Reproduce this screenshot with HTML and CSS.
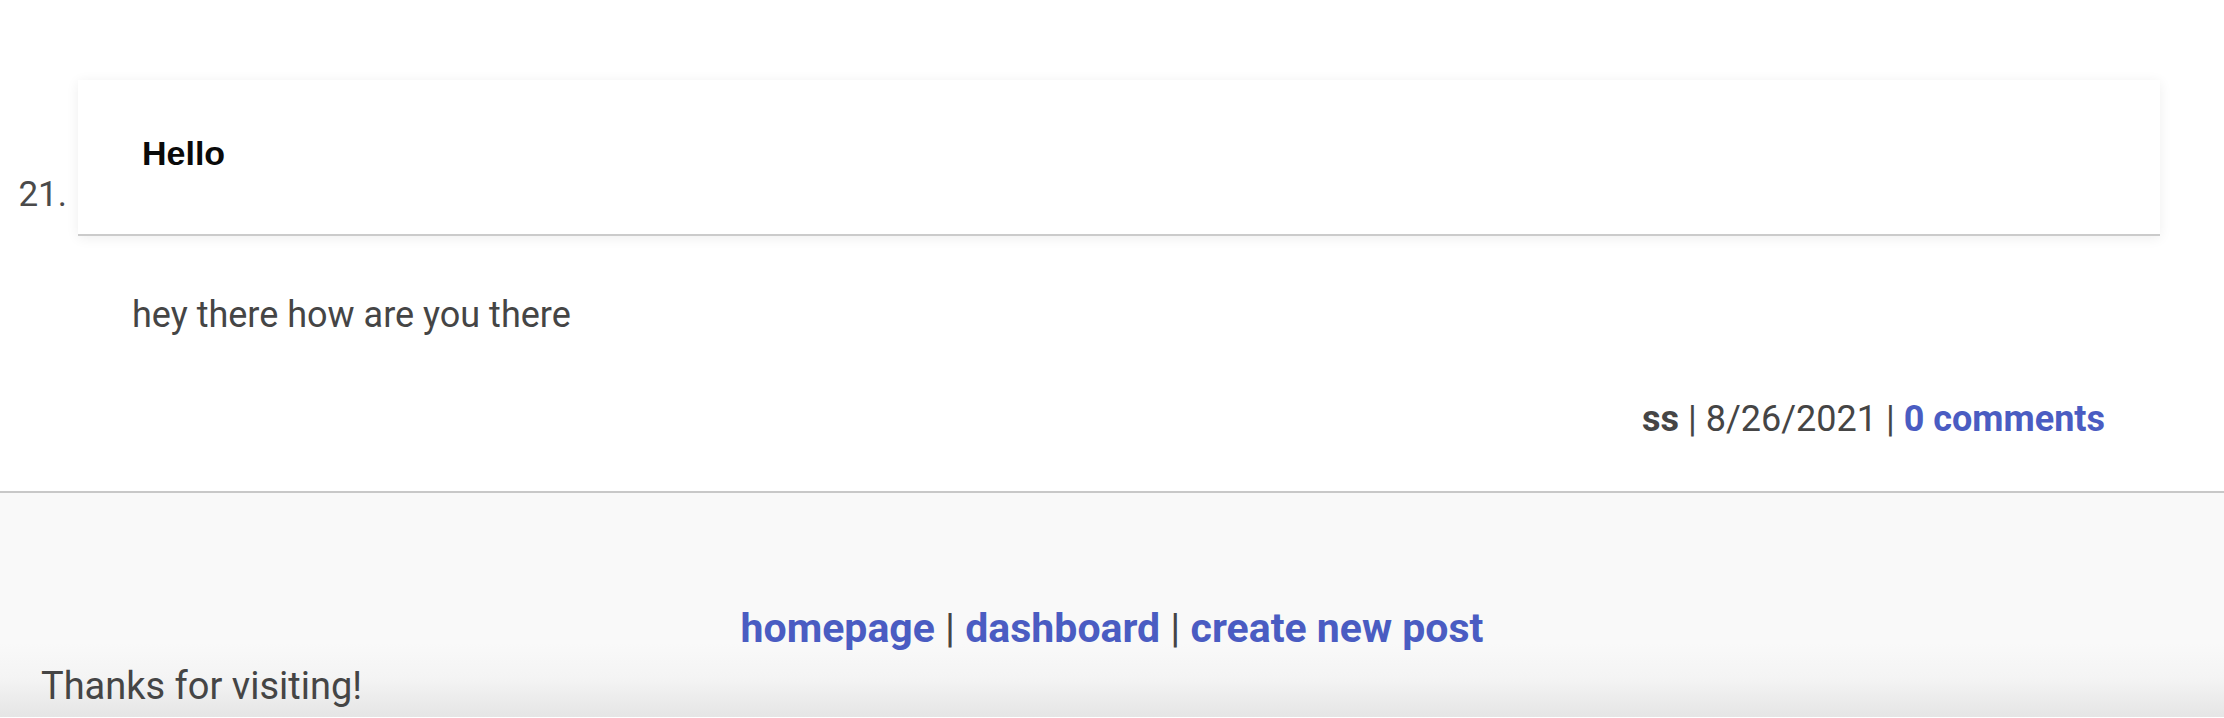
FILE: index.html
```html
<!DOCTYPE html>
<html>
<head>
<meta charset="utf-8">
<link rel="stylesheet" href="styles.css">
</head>
<body>
<main class="posts">
  <div class="post">
    <div class="post-head">
      <span class="num">21.</span>
      <div class="card"><h2 class="title">Hello</h2></div>
    </div>
    <p class="excerpt">hey there how are you there</p>
    <p class="meta"><b>ss</b> | 8/26/2021 | <a class="link" href="#">0 comments</a></p>
  </div>
</main>
<footer class="footer">
  <nav class="nav"><a class="link" href="#">homepage</a> | <a class="link" href="#">dashboard</a> | <a class="link" href="#">create new post</a></nav>
  <p class="thanks">Thanks for visiting!</p>
</footer>
</body>
</html>
```
FILE: styles.css
```css
html, body {
  margin: 0;
  padding: 0;
  background: #fff;
  font-family: Roboto, "Liberation Sans", sans-serif;
  color: #454545;
  height: 718px;
  overflow: hidden;
}
.posts {
  padding-top: 80px;
  border-bottom: 2px solid #c8c8c8;
}
.post-head {
  display: flex;
  align-items: flex-end;
}
.num {
  width: 67px;
  padding-right: 11px;
  text-align: right;
  font-size: 35px;
  line-height: 1;
  margin-bottom: 24px;
  color: #4a4a4a;
}
.card {
  flex: 1;
  margin-right: 64px;
  height: 154px;
  background: #fff;
  border-bottom: 2px solid #cbcbcb;
  box-shadow: 0 2px 12px rgba(0,0,0,0.07);
  padding-left: 64px;
  box-sizing: content-box;
}
.title {
  margin: 0;
  padding-top: 56px;
  font-family: "Liberation Sans", Arial, sans-serif;
  font-weight: bold;
  font-size: 34px;
  line-height: 1;
  color: #0a0a0a;
}
.excerpt {
  margin: 0;
  padding: 61px 0 0 132px;
  font-size: 36px;
  line-height: 1;
}
.meta {
  margin: 0;
  padding: 68px 119px 54px 0;
  text-align: right;
  font-size: 36px;
  line-height: 1;
}
.meta b { font-weight: bold; }
.link {
  color: #4a5cc2;
  font-weight: bold;
  text-decoration: none;
}
.footer {
  height: 224px;
  background: linear-gradient(to bottom, #f9f9f9 0, #f9f9f9 150px, #f4f4f4 185px, #e5e5e5 224px);
}
.nav {
  padding-top: 115px;
  text-align: center;
  font-size: 41px;
  line-height: 1;
  color: #454545;
}
.thanks {
  margin: 0;
  padding: 18px 0 0 41px;
  font-size: 38px;
  line-height: 1;
}
```
